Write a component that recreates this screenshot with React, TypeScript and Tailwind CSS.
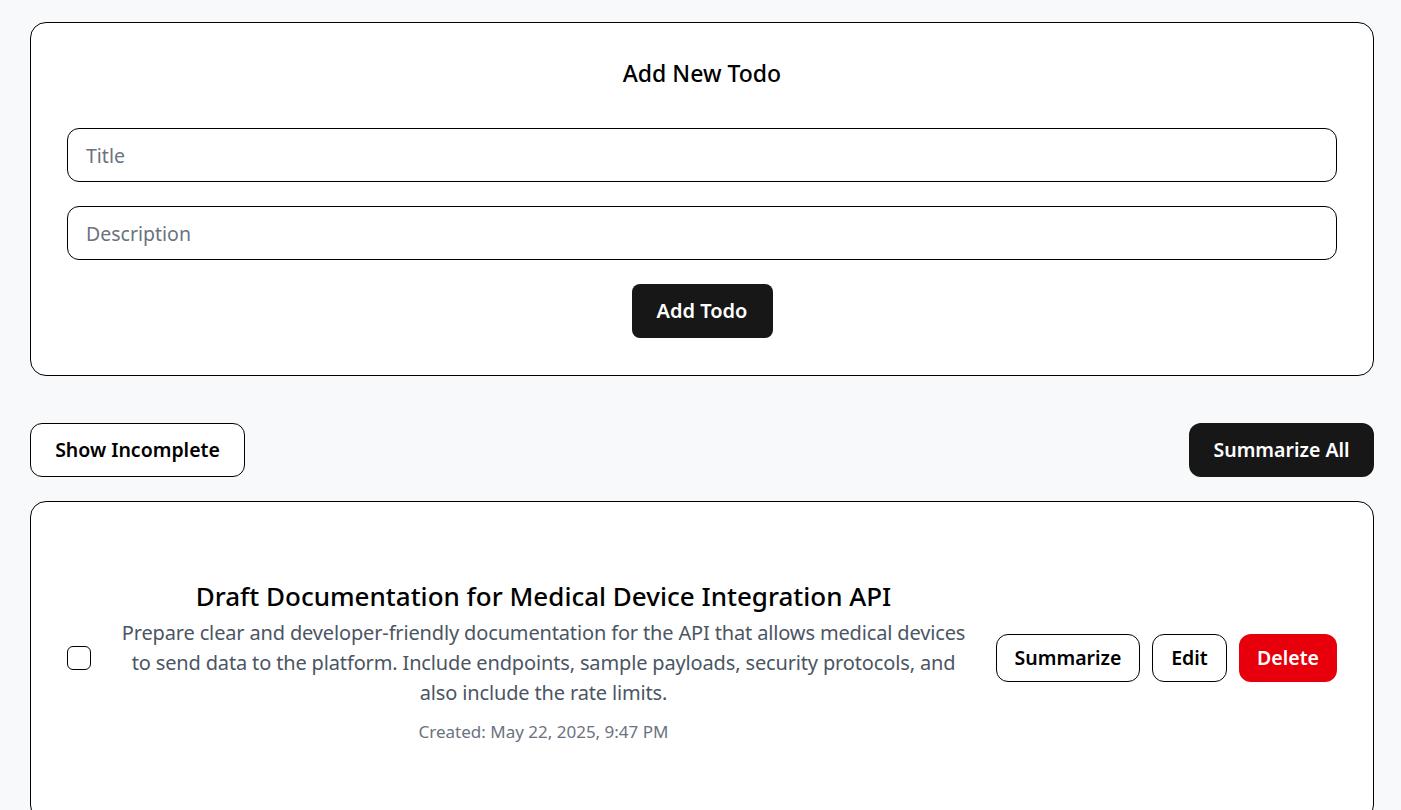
import React from "react";

export default function App() {
  return (
    <div
      className="min-h-screen bg-[#f8f9fb] pl-[30px] pr-[27px] pt-[22px] text-black"
      style={{ fontFamily: '"Noto Sans", "Open Sans", sans-serif' }}
    >
      <div className="flex flex-col rounded-2xl border border-black bg-white px-9 pt-[36px] pb-[37px]">
        <h2 className="text-center text-[23px] font-medium leading-[28px]">Add New Todo</h2>
        <div className="mt-[41px] flex flex-col gap-6">
          <input
            placeholder="Title"
            className="h-[54px] w-full rounded-xl border border-black px-[18px] text-[19.5px] placeholder:text-[#6b7280] outline-none"
          />
          <input
            placeholder="Description"
            className="h-[54px] w-full rounded-xl border border-black px-[18px] text-[19.5px] placeholder:text-[#6b7280] outline-none"
          />
          <div className="flex justify-center">
            <button className="h-[54px] w-[141px] rounded-lg bg-[#171717] text-[20px] font-semibold text-white">
              Add Todo
            </button>
          </div>
        </div>
      </div>

      <div className="mt-[47px] flex items-center justify-between">
        <button className="h-[54px] w-[215px] rounded-xl border border-black bg-white text-[19.5px] font-semibold">
          Show Incomplete
        </button>
        <button className="h-[54px] w-[185px] rounded-xl bg-[#171717] text-[19.5px] font-semibold text-white">
          Summarize All
        </button>
      </div>

      <div className="mt-6 flex items-center gap-6 rounded-2xl border border-black bg-white px-9 pt-[76px] pb-[76px]">
        <div className="mb-[6px] h-6 w-6 shrink-0 rounded-md border border-black bg-white" />
        <div className="flex flex-1 flex-col items-center text-center">
          <h3 className="mb-1 text-[26px] font-medium leading-[36px]">
            Draft Documentation for Medical Device Integration API
          </h3>
          <p className="text-[20px] leading-[30px] tracking-[-0.15px] text-[#4b5563]">
            Prepare clear and developer-friendly documentation for the API that allows medical devices
            to send data to the platform. Include endpoints, sample payloads, security protocols, and
            also include the rate limits.
          </p>
          <p className="mt-[12px] text-[17px] leading-[24px] text-[#6b7280]">Created: May 22, 2025, 9:47 PM</p>
        </div>
        <div className="mb-[6px] flex shrink-0 items-center gap-3">
          <button className="h-12 w-[144px] rounded-xl border border-black bg-white text-[19.5px] font-semibold">
            Summarize
          </button>
          <button className="h-12 w-[75px] rounded-xl border border-black bg-white text-[19.5px] font-semibold">
            Edit
          </button>
          <button className="h-12 w-[98px] rounded-xl bg-[#e7000b] text-[19.5px] font-semibold text-white">
            Delete
          </button>
        </div>
      </div>
    </div>
  );
}
